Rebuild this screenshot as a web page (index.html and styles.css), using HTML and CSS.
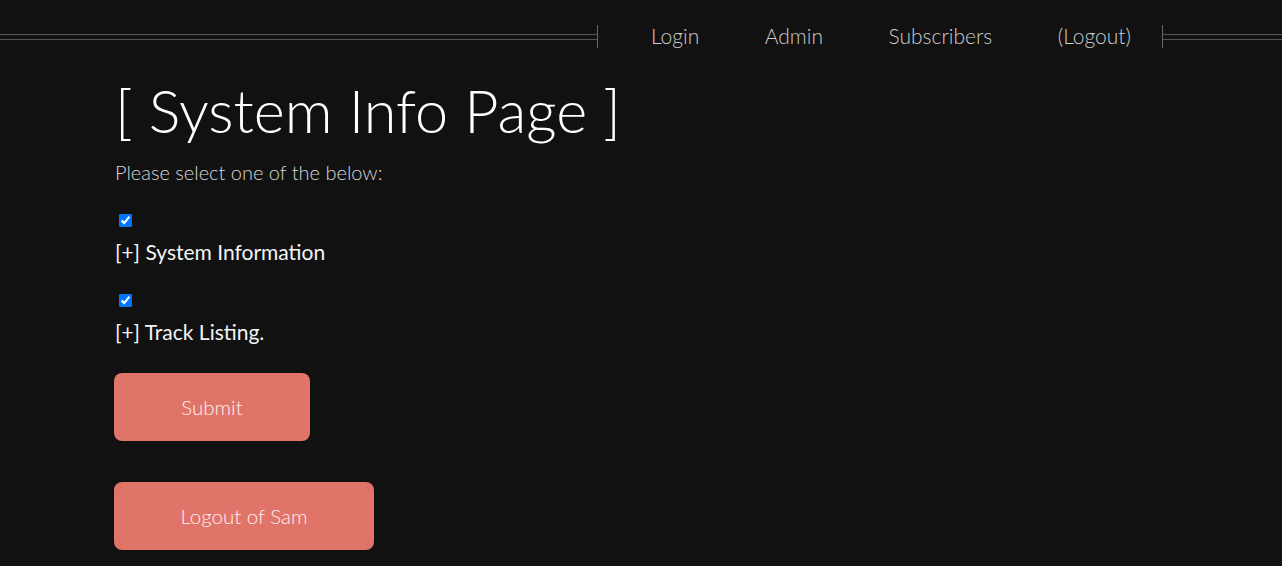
FILE: index.html
```html
<!DOCTYPE html>
<html lang="en">
<head>
<meta charset="utf-8">
<title>System Info Page</title>
<link rel="stylesheet" href="styles.css">
</head>
<body>
<header class="topbar">
  <div class="rule rule-left"></div>
  <nav class="nav">
    <a class="nav-link" href="#">Login</a>
    <a class="nav-link" href="#">Admin</a>
    <a class="nav-link" href="#">Subscribers</a>
    <a class="nav-link" href="#">(Logout)</a>
  </nav>
  <div class="rule rule-right"></div>
</header>
<main class="content">
  <h1 class="title">[ System Info Page ]</h1>
  <p class="intro">Please select one of the below:</p>
  <form class="form">
    <div class="opt">
      <input class="check" type="checkbox" id="sys" checked>
      <label class="opt-label" for="sys">[+] System Information</label>
    </div>
    <div class="opt">
      <input class="check" type="checkbox" id="tracks" checked>
      <label class="opt-label" for="tracks">[+] Track Listing.</label>
    </div>
    <button class="btn btn-submit" type="button">Submit</button>
    <button class="btn btn-logout" type="button">Logout of Sam</button>
  </form>
</main>
</body>
</html>
```

FILE: styles.css
```css
html, body {
  margin: 0;
  padding: 0;
  background: #111111;
}
body {
  font-family: "Lato", "Open Sans", sans-serif;
  color: #ffffff;
}
.topbar {
  display: flex;
  align-items: center;
  padding-top: 25px;
  height: 23px;
}
.rule {
  height: 4px;
  border-top: 1px solid #555555;
  border-bottom: 1px solid #555555;
}
.rule-left {
  width: 597px;
}
.rule-right {
  flex: 1;
}
.nav {
  display: flex;
  align-items: center;
  height: 23px;
  border-left: 1px solid #666666;
  border-right: 1px solid #666666;
  padding: 0 31px 0 53px;
  gap: 65.5px;
}
.nav-link {
  font-weight: 300;
  font-size: 21px;
  line-height: 23px;
  margin-top: -2px;
  color: #cccccc;
  text-decoration: none;
}
.content {
  padding-left: 115px;
}
.title {
  margin: 26px 0 0 0;
  font-weight: 300;
  font-size: 59.4px;
  line-height: 72px;
  color: #ffffff;
}
.intro {
  margin: 13px 0 0 0;
  font-weight: 300;
  font-size: 20px;
  line-height: 26px;
  color: #d8d8d8;
}
.form {
  margin: 0;
}
.opt {
  margin-top: 29px;
}
.check {
  display: block;
  width: 13px;
  height: 13px;
  margin: 3px 3px 3px 4px;
}
.opt-label {
  display: block;
  margin-top: 12px;
  font-size: 21px;
  line-height: 26px;
  color: #f4f4f4;
}
.btn {
  display: block;
  height: 68px;
  padding: 0;
  border: none;
  border-radius: 8px;
  background: #e07468;
  color: #fff0ee;
  font-family: "Lato", "Open Sans", sans-serif;
  font-weight: 300;
  font-size: 20.5px;
  text-align: center;
  margin-left: -1px;
}
.btn-submit {
  width: 196px;
  margin-top: 28px;
}
.btn-logout {
  width: 260px;
  margin-top: 41px;
}
```
